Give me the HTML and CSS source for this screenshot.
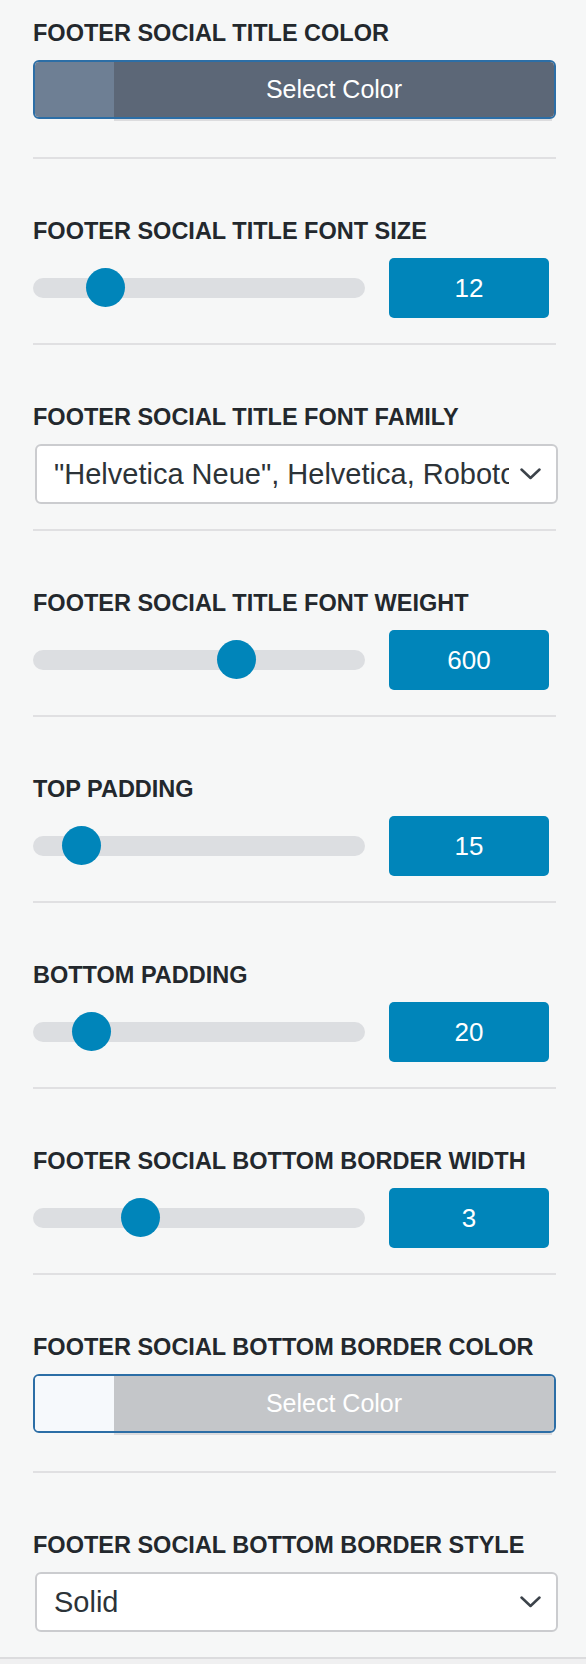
FILE: index.html
```html
<!DOCTYPE html>
<html lang="en">
<head>
    <meta charset="UTF-8">
    <meta name="viewport" content="width=device-width, initial-scale=1.0">
    <title>Footer Social Settings</title>
    <link rel="stylesheet" href="styles.css">
</head>
<body>
    <div class="panel">

        <!-- Title color -->
        <div class="control control-color">
            <span class="control-label">Footer Social Title Color</span>
            <button class="color-btn">
                <span class="swatch swatch-slate"></span>
                <span class="color-text color-text-dark">Select Color</span>
            </button>
        </div>

        <div class="control">
            <span class="control-label">Footer Social Title Font Size</span>
            <div class="range-row">
                <div class="track"><span class="thumb" style="left: 53px;"></span></div>
                <div class="range-value">12</div>
            </div>
        </div>

        <div class="control">
            <span class="control-label">Footer Social Title Font Family</span>
            <div class="select">
                <span class="select-text">"Helvetica Neue", Helvetica, Roboto, Arial, sans-serif</span>
                <svg class="chevron" width="21" height="12" viewBox="0 0 21 12"><polyline points="1.5,1.5 10.5,10 19.5,1.5" fill="none" stroke="#3c434a" stroke-width="2.5" stroke-linecap="round" stroke-linejoin="round"/></svg>
            </div>
        </div>

        <div class="control">
            <span class="control-label">Footer Social Title Font Weight</span>
            <div class="range-row">
                <div class="track"><span class="thumb" style="left: 184px;"></span></div>
                <div class="range-value">600</div>
            </div>
        </div>

        <div class="control">
            <span class="control-label">Top Padding</span>
            <div class="range-row">
                <div class="track"><span class="thumb" style="left: 29px;"></span></div>
                <div class="range-value">15</div>
            </div>
        </div>

        <div class="control">
            <span class="control-label">Bottom Padding</span>
            <div class="range-row">
                <div class="track"><span class="thumb" style="left: 39px;"></span></div>
                <div class="range-value">20</div>
            </div>
        </div>

        <div class="control">
            <span class="control-label">Footer Social Bottom Border Width</span>
            <div class="range-row">
                <div class="track"><span class="thumb" style="left: 88px;"></span></div>
                <div class="range-value">3</div>
            </div>
        </div>

        <!-- Border color -->
        <div class="control control-color">
            <span class="control-label">Footer Social Bottom Border Color</span>
            <button class="color-btn">
                <span class="swatch swatch-white"></span>
                <span class="color-text color-text-light">Select Color</span>
            </button>
        </div>

        <div class="control control-last">
            <span class="control-label">Footer Social Bottom Border Style</span>
            <div class="select">
                <span class="select-text">Solid</span>
                <svg class="chevron" width="21" height="12" viewBox="0 0 21 12"><polyline points="1.5,1.5 10.5,10 19.5,1.5" fill="none" stroke="#3c434a" stroke-width="2.5" stroke-linecap="round" stroke-linejoin="round"/></svg>
            </div>
        </div>

    </div>
    <div class="panel-footer"></div>
</body>
</html>
```

FILE: styles.css
```css
body {
    font-family: "Liberation Sans", Arial, sans-serif;
    margin: 0;
    background-color: #f6f7f7;
    color: #23282d;
}
.panel {
    width: 523px;
    padding-left: 33px;
}
.control {
    padding: 59px 0 25px;
    border-bottom: 2px solid #e0e0e2;
}
.control:first-child {
    padding-top: 20px;
}
.control-color {
    padding-bottom: 38px;
}
.control-last {
    border-bottom: none;
}
.control-label {
    display: block;
    font-size: 23.5px;
    font-weight: bold;
    line-height: 26px;
    text-transform: uppercase;
    margin-bottom: 14px;
    white-space: nowrap;
}

/* color picker button */
.color-btn {
    position: relative;
    display: flex;
    width: 523px;
    height: 59px;
    padding: 0;
    border: 2px solid #2c6ea6;
    border-radius: 6px;
    background: none;
    font-family: inherit;
    cursor: pointer;
}
.color-btn::after {
    content: "";
    position: absolute;
    left: 79px;
    right: 2px;
    bottom: -4px;
    height: 2px;
    background-color: #dcdcde;
}
.swatch {
    width: 79px;
    border-radius: 4px 0 0 4px;
}
.swatch-slate { background-color: #6e7f94; }
.swatch-white { background-color: #f6f9fc; }
.color-text {
    flex: 1;
    display: flex;
    align-items: center;
    justify-content: center;
    font-size: 25px;
    color: #fff;
    border-radius: 0 4px 4px 0;
}
.color-text-dark { background-color: #5c6777; }
.color-text-light { background-color: #c4c6c9; }

/* range slider */
.range-row {
    display: flex;
    align-items: center;
    gap: 24px;
    height: 60px;
}
.track {
    position: relative;
    width: 332px;
    height: 20px;
    border-radius: 10px;
    background-color: #dcdee1;
}
.thumb {
    position: absolute;
    top: -10px;
    width: 39px;
    height: 39px;
    border-radius: 50%;
    background-color: #0085ba;
}
.range-value {
    width: 160px;
    height: 60px;
    display: flex;
    align-items: center;
    justify-content: center;
    border-radius: 5px;
    background-color: #0085ba;
    color: #fff;
    font-size: 26px;
}

/* select */
.select {
    box-sizing: border-box;
    display: flex;
    align-items: center;
    width: 523px;
    height: 60px;
    margin-left: 2px;
    padding: 0 15px 0 17px;
    border: 2px solid #cbcccf;
    border-radius: 6px;
    background-color: #fff;
}
.select-text {
    flex: 1;
    overflow: hidden;
    white-space: nowrap;
    font-size: 29px;
    color: #2c3338;
}
.chevron {
    margin-left: 11px;
    flex-shrink: 0;
}

.panel-footer {
    height: 20px;
    border-top: 2px solid #dcdcde;
    background-color: #f0f0f1;
}
```
